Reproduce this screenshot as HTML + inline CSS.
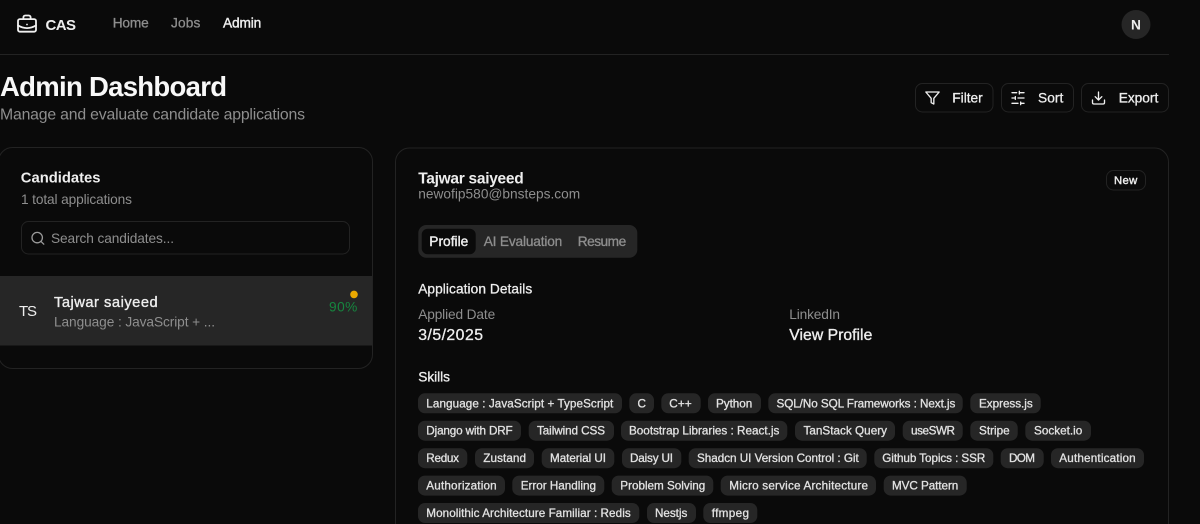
<!DOCTYPE html>
<html lang="en"><head><meta charset="utf-8"><title>Admin Dashboard</title>
<style>
html,body{margin:0;padding:0;background:#0a0a0a;width:1200px;height:524px;overflow:hidden}
svg{display:block}
text{font-family:"Liberation Sans",sans-serif;fill:currentColor;stroke:currentColor;stroke-width:0;font-size:13.7px}
.w{color:#eeeeee}.g{color:#8e8e8e}.m{stroke-width:.3px}.b{font-weight:700}
.chip text{font-size:11.7px;color:#e2e2e2;stroke-width:.3px}
.chip rect{fill:#262626}
.ic{fill:none;stroke:#f0f0f0;stroke-width:2;stroke-linecap:round;stroke-linejoin:round}
.bd{fill:#0a0a0a;stroke:#232323;stroke-width:1}
</style></head><body>
<svg width="1200" height="524" viewBox="0 0 1200 524" xmlns="http://www.w3.org/2000/svg">
<rect width="1200" height="524" fill="#0a0a0a"/>
<!-- nav -->
<g class="ic" transform="translate(16.2,13.7) scale(.9)"><path d="M12 12h.01"/><path d="M16 6V4a2 2 0 0 0-2-2h-4a2 2 0 0 0-2 2v2"/><path d="M22 13a18.15 18.15 0 0 1-20 0"/><rect x="2" y="6" width="20" height="14" rx="2"/></g>
<text class="w b" x="45.5" y="30" style="font-size:15px" textLength="30.5">CAS</text>
<text class="g m" x="112.7" y="27.3" textLength="36">Home</text>
<text class="g m" x="171" y="27.3" textLength="29.3">Jobs</text>
<text class="w m" x="223" y="27.3" textLength="38.3" style="stroke-width:.4px">Admin</text>
<circle cx="1136" cy="24.5" r="14.5" fill="#262626"/>
<text class="w b" x="1131" y="29.5" textLength="10">N</text>
<rect x="0" y="54" width="1169" height="1" fill="#232323"/>
<!-- heading -->
<text class="w b" x="0" y="96" style="font-size:27.5px;color:#f8f8f8" textLength="227">Admin Dashboard</text>
<text class="g" x="0" y="119.5" style="font-size:15.8px" textLength="305">Manage and evaluate candidate applications</text>
<!-- buttons -->
<rect class="bd" x="915.5" y="83.5" width="77.5" height="28.5" rx="7"/>
<rect class="bd" x="1001.5" y="83.5" width="72" height="28.5" rx="7"/>
<rect class="bd" x="1081.5" y="83.5" width="87" height="28.5" rx="7"/>
<g class="ic" transform="translate(924.5,90) scale(.667)"><polygon points="22 3 2 3 10 12.46 10 19 14 21 14 12.46 22 3"/></g>
<g class="ic" transform="translate(1010,90) scale(.667)"><path d="M21 4h-7M10 4H3M21 12h-9M8 12H3M21 20h-5M12 20H3M14 2v4M8 10v4M16 18v4"/></g>
<g class="ic" transform="translate(1090.5,90) scale(.667)"><path d="M21 15v4a2 2 0 0 1-2 2H5a2 2 0 0 1-2-2v-4"/><polyline points="7 10 12 15 17 10"/><line x1="12" y1="15" x2="12" y2="3"/></g>
<text class="w m" x="952.3" y="102.3" textLength="30.4">Filter</text>
<text class="w m" x="1038" y="102.3" textLength="25.3">Sort</text>
<text class="w m" x="1118.7" y="102.3" textLength="39.6">Export</text>
<!-- left card -->
<rect class="bd" x="-1.5" y="147.5" width="374" height="221" rx="14"/>
<text class="w b" x="20.8" y="182.7" style="font-size:14.8px" textLength="79.7">Candidates</text>
<text class="g" x="21" y="204" textLength="111">1 total applications</text>
<rect class="bd" x="21.5" y="221.5" width="328" height="32.5" rx="7"/>
<g fill="none" stroke="#9a9a9a" stroke-width="1.3" stroke-linecap="round"><circle cx="37.2" cy="237.6" r="5.2"/><path d="M41 241.4l2.8 2.8"/></g>
<text class="g" x="51" y="243" textLength="123">Search candidates...</text>
<rect x="0" y="276" width="372" height="69.5" fill="#262626"/>
<text class="w" x="19" y="316" style="font-size:15px" textLength="18">TS</text>
<text class="w m" x="54" y="307.2" style="font-size:14.7px;stroke-width:.35px" textLength="103.7">Tajwar saiyeed</text>
<text class="g" x="54" y="326.7" textLength="161">Language : JavaScript + ...</text>
<circle cx="354" cy="294.4" r="3.8" fill="#eaa800"/>
<text x="329" y="311.7" style="color:#16863f" textLength="28.3">90%</text>
<!-- right card -->
<path class="bd" d="M395.5 524V162a14 14 0 0 1 14-14H1154.5a14 14 0 0 1 14 14V524"/>
<text class="w b" x="418.2" y="183.3" style="font-size:15.5px" textLength="105.5">Tajwar saiyeed</text>
<text class="g" x="418.2" y="198.7" textLength="162">newofip580@bnsteps.com</text>
<rect class="bd" x="1106.5" y="170.5" width="39" height="19.5" rx="7"/>
<text class="w m" x="1114" y="183.8" style="font-size:11.3px;stroke-width:.4px" textLength="23.3">New</text>
<rect x="418.3" y="225" width="219" height="32.7" rx="8" fill="#262626"/>
<rect x="421.7" y="228.7" width="54" height="25.6" rx="6" fill="#0a0a0a"/>
<text class="w m" x="429.3" y="246" style="stroke-width:.4px" textLength="39">Profile</text>
<text class="g m" x="483.7" y="246" textLength="78.6">AI Evaluation</text>
<text class="g m" x="577.7" y="246" textLength="48.5">Resume</text>
<text class="w m" x="418.2" y="293.5" textLength="114">Application Details</text>
<text class="g" x="418.2" y="319" textLength="77">Applied Date</text>
<text class="w m" x="418.2" y="340" style="font-size:15.8px" textLength="64.8">3/5/2025</text>
<text class="g" x="789.3" y="319" textLength="50.7">LinkedIn</text>
<text class="w m" x="789.3" y="340" style="font-size:15.7px;stroke-width:.35px" textLength="83">View Profile</text>
<text class="w m" x="418.3" y="381.7" textLength="31.7">Skills</text>
<!-- chips -->
<g class="chip">
<rect x="418" y="393.3" width="204" height="20" rx="7"/><text x="426.3" y="407.4" textLength="187">Language : JavaScript + TypeScript</text>
<rect x="629.3" y="393.3" width="24.7" height="20" rx="7"/><text x="637.5" y="407.4" textLength="7.5">C</text>
<rect x="661.3" y="393.3" width="39.4" height="20" rx="7"/><text x="669.3" y="407.4" textLength="22.4">C++</text>
<rect x="708" y="393.3" width="53" height="20" rx="7"/><text x="716" y="407.4" textLength="36.3">Python</text>
<rect x="768.3" y="393.3" width="194.4" height="20" rx="7"/><text x="776.5" y="407.4" textLength="178.8">SQL/No SQL Frameworks : Next.js</text>
<rect x="970.3" y="393.3" width="70.4" height="20" rx="7"/><text x="979" y="407.4" textLength="53.7">Express.js</text>

<rect x="418" y="420.7" width="103" height="20" rx="7"/><text x="426.3" y="434.6" textLength="86.4">Django with DRF</text>
<rect x="528.7" y="420.7" width="85.3" height="20" rx="7"/><text x="537" y="434.6" textLength="68">Tailwind CSS</text>
<rect x="621" y="420.7" width="166.3" height="20" rx="7"/><text x="629" y="434.6" textLength="150.3">Bootstrap Libraries : React.js</text>
<rect x="795" y="420.7" width="100" height="20" rx="7"/><text x="803.5" y="434.6" textLength="83.5">TanStack Query</text>
<rect x="902.7" y="420.7" width="60" height="20" rx="7"/><text x="911" y="434.6" textLength="44">useSWR</text>
<rect x="970.3" y="420.7" width="47.4" height="20" rx="7"/><text x="979" y="434.6" textLength="30.7">Stripe</text>
<rect x="1025.3" y="420.7" width="65.7" height="20" rx="7"/><text x="1034" y="434.6" textLength="48.3">Socket.io</text>

<rect x="418" y="448.2" width="49.3" height="20" rx="7"/><text x="426.3" y="462.1" textLength="32.7">Redux</text>
<rect x="475" y="448.2" width="59" height="20" rx="7"/><text x="483.3" y="462.1" textLength="42.7">Zustand</text>
<rect x="541.7" y="448.2" width="72.6" height="20" rx="7"/><text x="550" y="462.1" textLength="56">Material UI</text>
<rect x="622" y="448.2" width="59.3" height="20" rx="7"/><text x="630" y="462.1" textLength="43">Daisy UI</text>
<rect x="688.7" y="448.2" width="178" height="20" rx="7"/><text x="697" y="462.1" textLength="161.7">Shadcn UI Version Control : Git</text>
<rect x="874.3" y="448.2" width="119" height="20" rx="7"/><text x="882.3" y="462.1" textLength="103">Github Topics : SSR</text>
<rect x="1000.7" y="448.2" width="43" height="20" rx="7"/><text x="1009" y="462.1" textLength="26">DOM</text>
<rect x="1051" y="448.2" width="93" height="20" rx="7"/><text x="1059.3" y="462.1" textLength="76.4">Authentication</text>

<rect x="418" y="475.6" width="87" height="20" rx="7"/><text x="426.3" y="489.5" textLength="70.4">Authorization</text>
<rect x="512.3" y="475.6" width="92" height="20" rx="7"/><text x="520.7" y="489.5" textLength="75.3">Error Handling</text>
<rect x="611.7" y="475.6" width="101.6" height="20" rx="7"/><text x="620.3" y="489.5" textLength="85">Problem Solving</text>
<rect x="720.7" y="475.6" width="155.3" height="20" rx="7"/><text x="729.3" y="489.5" textLength="138.7">Micro service Architecture</text>
<rect x="883.7" y="475.6" width="83" height="20" rx="7"/><text x="892" y="489.5" textLength="66.3">MVC Pattern</text>

<rect x="418" y="503" width="221.3" height="20" rx="7"/><text x="426.3" y="516.9" textLength="204.4">Monolithic Architecture Familiar : Redis</text>
<rect x="647" y="503" width="49" height="20" rx="7"/><text x="655" y="516.9" textLength="32.3">Nestjs</text>
<rect x="703.3" y="503" width="54" height="20" rx="7"/><text x="711.7" y="516.9" textLength="37.3">ffmpeg</text>
</g>
</svg>
</body></html>
